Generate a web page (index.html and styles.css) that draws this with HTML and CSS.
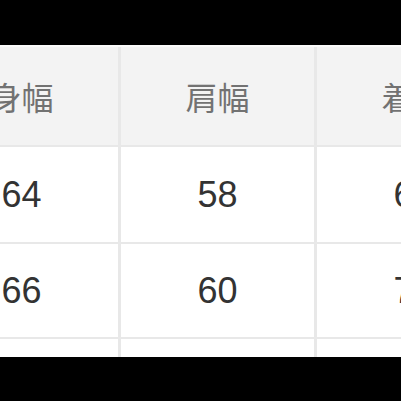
FILE: index.html
```html
<!DOCTYPE html>
<html lang="ja">
<head>
<meta charset="utf-8">
<link rel="stylesheet" href="styles.css">
</head>
<body>
<div class="bar"></div>
<div class="frame">
  <div class="grid">
    <div class="cell head">身幅</div>
    <div class="cell head">肩幅</div>
    <div class="cell head">着丈</div>
    <div class="cell num">64</div>
    <div class="cell num">58</div>
    <div class="cell num">68</div>
    <div class="cell num">66</div>
    <div class="cell num">60</div>
    <div class="cell num">70</div>
    <div class="cell num"></div>
    <div class="cell num"></div>
    <div class="cell num"></div>
  </div>
</div>
</body>
</html>
```
FILE: styles.css
```css
html, body {
  margin: 0;
  padding: 0;
  background: #000;
  width: 401px;
  height: 401px;
  overflow: hidden;
}
.bar {
  height: 45px;
  background: #000;
}
.frame {
  height: 312px;
  overflow: hidden;
  background: #e8e8e8;
  border-top: 2px solid #fbfbfb;
  box-sizing: border-box;
}
.grid {
  display: grid;
  grid-template-columns: repeat(3, 193px);
  grid-template-rows: 98px 95px 93px 60px;
  column-gap: 3px;
  row-gap: 2px;
  margin-left: -75px;
  width: 585px;
}
.cell {
  display: flex;
  align-items: center;
  justify-content: center;
  background: #fff;
}
.head {
  background: #f3f3f3;
  color: #727272;
  font-family: "Noto Sans CJK JP", "Noto Sans", sans-serif;
  font-size: 32px;
  font-weight: 400;
}
.num {
  color: #333;
  font-family: "Liberation Sans", Arial, sans-serif;
  font-size: 36px;
}
```
